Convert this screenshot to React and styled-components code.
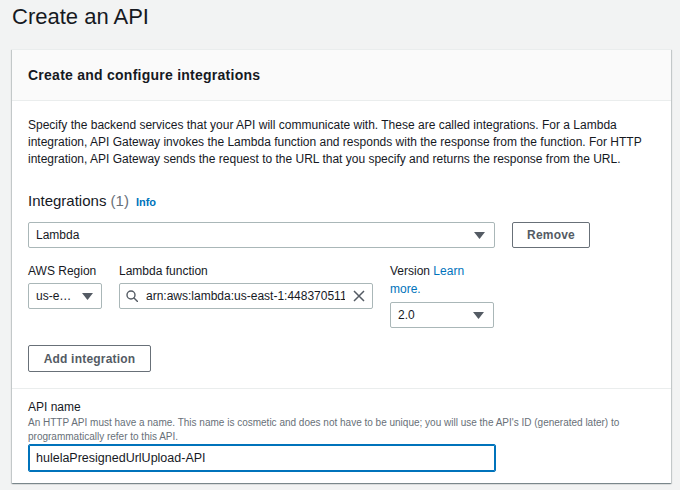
import React from 'react';
import styled, { createGlobalStyle } from 'styled-components';

const GlobalStyle = createGlobalStyle`
  body {
    margin: 0;
    background: #f2f3f3;
    font-family: "Liberation Sans", Arial, sans-serif;
    color: #16191f;
  }
`;

const Page = styled.div`
  padding: 3px 9px 0 12px;
  height: 490px;
  box-sizing: border-box;
  overflow: hidden;
`;

const Title = styled.h1`
  margin: 0 0 18px;
  font-size: 22px;
  line-height: 28px;
  font-weight: 400;
  color: #16191f;
`;

const Card = styled.section`
  background: #fff;
  box-shadow: 0 1px 1px 0 rgba(0, 28, 36, 0.3), 1px 1px 1px 0 rgba(0, 28, 36, 0.15),
    -1px 1px 1px 0 rgba(0, 28, 36, 0.15);
  border-top: 1px solid #eaeded;
`;

const CardHeader = styled.header`
  background: #fafafa;
  border-bottom: 1px solid #eaeded;
  height: 50px;
  display: flex;
  align-items: center;
  padding: 0 16px;
  h2 {
    margin: 0;
    font-size: 14px;
    font-weight: 700;
    letter-spacing: 0.25px;
  }
`;

const CardBody = styled.div`
  padding: 16px 16px 16px 16px;
`;

const Description = styled.p`
  margin: 0;
  font-size: 12px;
  line-height: 17px;
`;

const Heading = styled.h3`
  margin: 23px 0 0;
  height: 20px;
  font-size: 15px;
  line-height: 20px;
  font-weight: 400;
  display: flex;
  align-items: baseline;
  gap: 7px;
  span.count {
    color: #687078;
  }
`;

const InfoLink = styled.a`
  font-size: 11px;
  line-height: 20px;
  font-weight: 700;
  color: #0073bb;
  text-decoration: none;
`;

const Row = styled.div`
  display: flex;
  align-items: flex-start;
  gap: ${(p) => p.$gap || 17}px;
  margin-top: ${(p) => p.$top || 0}px;
`;

const Field = styled.div`
  width: ${(p) => p.$width}px;
  display: flex;
  flex-direction: column;
`;

const Label = styled.label`
  display: block;
  font-size: 12px;
  line-height: ${(p) => p.$line || 18}px;
  margin-bottom: ${(p) => p.$gap ?? 3}px;
  a {
    color: #0073bb;
    text-decoration: none;
  }
`;

const Control = styled.div`
  box-sizing: border-box;
  width: ${(p) => (p.$width ? `${p.$width}px` : '100%')};
  height: ${(p) => p.$height || 26}px;
  border: 1px solid ${(p) => (p.$focus ? '#0073bb' : '#aab7b8')};
  box-shadow: ${(p) => (p.$focus ? 'inset 0 0 0 1px #0073bb' : 'none')};
  border-radius: 2px;
  background: #fff;
  display: flex;
  align-items: center;
  padding: 0 ${(p) => p.$padRight ?? 7}px 0 ${(p) => p.$padLeft ?? 7}px;
  gap: 8px;
  font-size: ${(p) => p.$size || 12}px;
  color: #16191f;
`;

const Value = styled.span`
  flex: 1;
  min-width: 0;
  white-space: nowrap;
  overflow: hidden;
  text-overflow: ${(p) => (p.$ellipsis ? 'ellipsis' : 'clip')};
`;

const Button = styled.button`
  box-sizing: border-box;
  height: ${(p) => p.$height || 26}px;
  width: ${(p) => p.$width}px;
  background: #fff;
  border: 1px solid #687078;
  border-radius: 2px;
  font-family: inherit;
  font-size: 12px;
  font-weight: 700;
  color: #545b64;
  letter-spacing: 0.2px;
  padding: 0;
`;

const Section = styled.div`
  border-top: 1px solid #eaeded;
  padding: 10px 16px 11px 16px;
`;

const Hint = styled.p`
  margin: 0;
  font-size: 10px;
  line-height: 14px;
  color: #687078;
`;

const Caret = () => (
  <svg width="11" height="7" viewBox="0 0 11 7">
    <path d="M0 0h11L5.5 7z" fill="#545b64" />
  </svg>
);

const SearchIcon = () => (
  <svg width="12" height="12" viewBox="0 0 12 12" fill="none" stroke="#545b64" strokeWidth="1.4">
    <circle cx="5" cy="5" r="4" />
    <path d="M8 8l3.5 3.5" strokeLinecap="round" />
  </svg>
);

const ClearIcon = () => (
  <svg width="12" height="12" viewBox="0 0 12 12" fill="none" stroke="#545b64" strokeWidth="1.5">
    <path d="M1 1l10 10M11 1L1 11" />
  </svg>
);

const App = () => {
  return (
    <Page>
      <GlobalStyle />
      <Title>Create an API</Title>
      <Card>
        <CardHeader>
          <h2>Create and configure integrations</h2>
        </CardHeader>
        <CardBody>
          <Description>
            Specify the backend services that your API will communicate with. These are called integrations. For a
            Lambda integration, API Gateway invokes the Lambda function and responds with the response from the
            function. For HTTP integration, API Gateway sends the request to the URL that you specify and returns the
            response from the URL.
          </Description>
          <Heading>
            <span>
              Integrations <span className="count">(1)</span>
            </span>
            <InfoLink href="#">Info</InfoLink>
          </Heading>
          <Row $top={11} $gap={17}>
            <Control $width={467} $padRight={9}>
              <Value>Lambda</Value>
              <Caret />
            </Control>
            <Button $width={78}>Remove</Button>
          </Row>
          <Row $top={14} $gap={17}>
            <Field $width={74}>
              <Label>AWS Region</Label>
              <Control $padRight={8}>
                <Value $ellipsis>us-east-1</Value>
                <Caret />
              </Control>
            </Field>
            <Field $width={254}>
              <Label>Lambda function</Label>
              <Control $padLeft={6} $padRight={7}>
                <SearchIcon />
                <Value>arn:aws:lambda:us-east-1:448370511485:function:hulelaPresignedUrlUpload</Value>
                <ClearIcon />
              </Control>
            </Field>
            <Field $width={104}>
              <Label $gap={4}>
                Version <a href="#">Learn more.</a>
              </Label>
              <Control $padRight={9}>
                <Value>2.0</Value>
                <Caret />
              </Control>
            </Field>
          </Row>
          <Row $top={17}>
            <Button $width={123} $height={27}>
              Add integration
            </Button>
          </Row>
        </CardBody>
        <Section>
          <Label $line={17} $gap={0}>
            API name
          </Label>
          <Hint>
            An HTTP API must have a name. This name is cosmetic and does not have to be unique; you will use the API's ID
            (generated later) to programmatically refer to this API.
          </Hint>
          <Control $width={468} $height={28} $focus $size={12.5}>
            <Value>hulelaPresignedUrlUpload-API</Value>
          </Control>
        </Section>
      </Card>
    </Page>
  );
};

export default App;
